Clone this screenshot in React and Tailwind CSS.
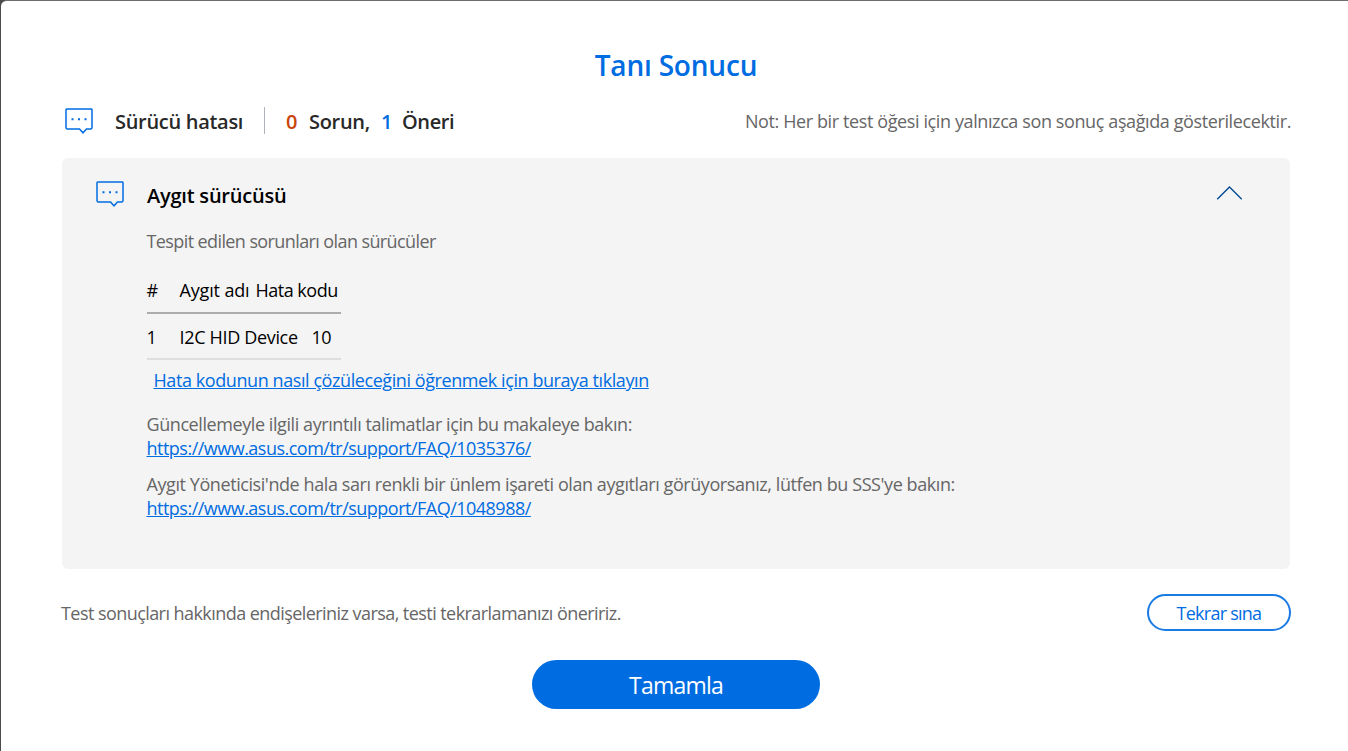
const drivers = [{ id: 1, name: 'I2C HID Device', code: 10 }]

const MessageIcon = () => (
  <svg width="28" height="27" viewBox="0 0 28 27" fill="none" className="shrink-0">
    <path
      d="M1.7 1H26.3Q27 1 27 1.7V19.5Q27 21 25.5 21H21.5L18 24.8L14.5 21H2.5Q1 21 1 19.5V1.7Q1 1 1.7 1Z"
      stroke="#006ce1"
      strokeWidth="1.5"
    />
    <path d="M6.5 10.2h2v2h-2zM13 10.2h2v2h-2zM19.5 10.2h2v2h-2z" fill="#006ce1" />
  </svg>
)

const App = () => {
  return (
    <div className="h-[751px] w-[1348px] overflow-hidden bg-[#4b4b4d] pl-px font-['Open_Sans',sans-serif] whitespace-nowrap">
      <div className="flex h-full flex-col rounded-tl-[6px] border-t border-[#6f6c6e] bg-white pr-[57px] pl-[60px]">
        <h1 className="mt-[44px] h-[40px] text-center text-[28px] leading-[40px] font-semibold tracking-[-0.2px] text-[#006ce1]">
          Tanı Sonucu
        </h1>

        <div className="mt-[21px] flex h-[30px] items-center justify-between">
          <div className="flex items-center text-[20px] font-semibold text-[#282828]">
            <div className="ml-1 w-[50px]">
              <MessageIcon />
            </div>
            <h2 className="w-[149px] pt-[2px] tracking-[-0.3px]">Sürücü hatası</h2>
            <div className="mb-px h-[27px] w-[22px] border-l border-[#aeb4ba]"></div>
            <span className="w-[23px] pt-[2px] text-[#c9450b]">0</span>
            <span className="w-[72px] pt-[2px] tracking-[-0.3px]">Sorun,</span>
            <span className="w-[21px] pt-[2px] text-[#006ce1]">1</span>
            <span className="pt-[2px] tracking-[-0.4px]">Öneri</span>
          </div>
          <p className="pt-px text-[18px] tracking-[-0.39px] text-[#666]">
            Not: Her bir test öğesi için yalnızca son sonuç aşağıda gösterilecektir.
          </p>
        </div>

        <section className="mt-[22px] ml-px h-[411px] w-[1228px] rounded-md bg-[#f4f4f4] pt-[23px] pr-[48px] pl-[34px] text-[18px] tracking-[-0.42px] text-[#666]">
          <div className="flex h-[30px]">
            <div className="w-[51px]">
              <MessageIcon />
            </div>
            <h3 className="grow text-[20px] leading-[30px] font-semibold tracking-[-0.22px] text-black">Aygıt sürücüsü</h3>
            <svg width="26" height="16" viewBox="0 0 26 16" fill="none" className="mt-[4px]">
              <path d="M1.2 14.3L13.5 2L25.8 14.3" stroke="#004a94" strokeWidth="1.4" />
            </svg>
          </div>

          <div className="ml-[50.5px]">
            <p className="mt-[18px] leading-[24px] tracking-[-0.6px]">Tespit edilen sorunları olan sürücüler</p>
            <table className="mt-[14px] w-[194px] table-fixed text-black">
              <thead>
                <tr className="h-[46px] border-b-2 border-[#acacac] text-left">
                  <th className="w-[33px] pt-[2px] font-normal">#</th>
                  <th className="w-[76px] pt-[2px] font-normal tracking-[-0.15px]">Aygıt adı</th>
                  <th className="pt-[2px] font-normal tracking-[-0.5px]">Hata kodu</th>
                </tr>
              </thead>
              <tbody>
                {drivers.map((driver) => (
                  <tr key={driver.id} className="h-[46px] border-b-2 border-[#dedede]">
                    <td className="pt-[2px]">{driver.id}</td>
                    <td colSpan={2} className="pt-[2px]">
                      <span className="inline-block w-[132px] tracking-[-0.33px]">{driver.name}</span>
                      {driver.code}
                    </td>
                  </tr>
                ))}
              </tbody>
            </table>
            <a href="#" className="mt-[8px] ml-[7px] block w-fit leading-[24px] text-[#006ce1] underline">
              Hata kodunun nasıl çözüleceğini öğrenmek için buraya tıklayın
            </a>
            <p className="mt-[20px] leading-[24px]">Güncellemeyle ilgili ayrıntılı talimatlar için bu makaleye bakın:</p>
            <a href="#" className="block w-fit leading-[24px] tracking-[-0.51px] text-[#006ce1] underline">
              https://www.asus.com/tr/support/FAQ/1035376/
            </a>
            <p className="mt-[12px] leading-[24px]">
              Aygıt Yöneticisi'nde hala sarı renkli bir ünlem işareti olan aygıtları görüyorsanız, lütfen bu SSS'ye bakın:
            </p>
            <a href="#" className="block w-fit leading-[24px] tracking-[-0.51px] text-[#006ce1] underline">
              https://www.asus.com/tr/support/FAQ/1048988/
            </a>
          </div>
        </section>

        <div className="mt-[25px] flex h-[37px] items-start justify-between">
          <p className="pt-[6px] text-[18px] tracking-[-0.56px] text-[#666]">
            Test sonuçları hakkında endişeleriniz varsa, testi tekrarlamanızı öneririz.
          </p>
          <button className="h-[37px] w-[144px] rounded-full border-2 border-[#1a7be4] text-[18px] leading-[30px] tracking-[-0.75px] text-[#006ce1]">
            Tekrar sına
          </button>
        </div>

        <button className="mt-[29px] ml-[471px] h-[49px] w-[288px] rounded-full bg-[#006ce1] pt-px text-[23px] leading-[46px] tracking-[-0.8px] text-white">
          Tamamla
        </button>
      </div>
    </div>
  )
}

export default App
